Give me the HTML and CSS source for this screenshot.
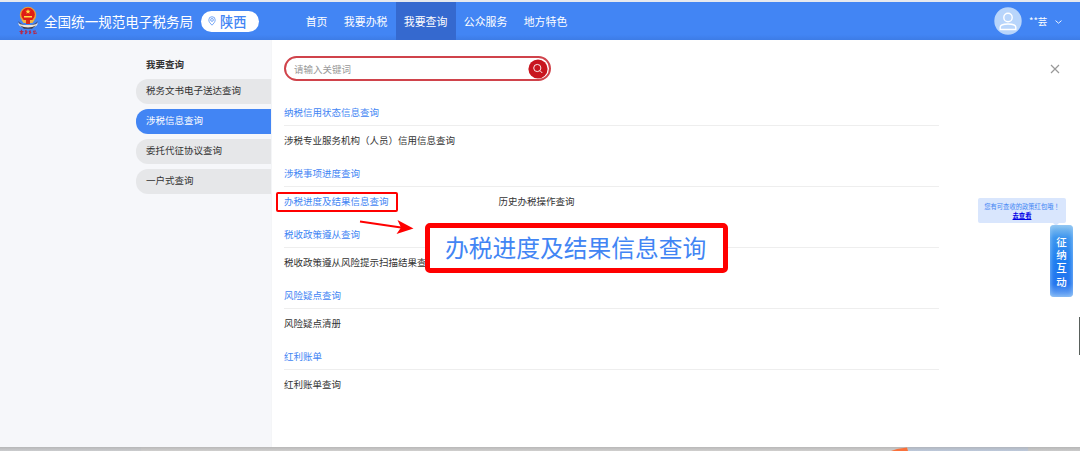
FILE: index.html
```html
<!DOCTYPE html>
<html lang="zh-CN">
<head>
<meta charset="utf-8">
<title>全国统一规范电子税务局</title>
<link rel="stylesheet" href="styles.css">
</head>
<body>
<div class="app">
  <header class="header">
    <svg class="logo" width="22" height="31" viewBox="0 0 22 31">
      <path d="M1.200 15C3 21 8 22 11 22s8-1 9.800-7C17 19 14 19 11 19s-6 0-9.800-4Z" fill="#55516a"/>
      <path d="M1 17c3 2 6 2 10 2s7 0 10-2c-1 4-5 5-10 5s-9-1-10-5Z" fill="#e9e4da"/>
      <path d="M3 19.500c5 2.500 11 2.500 16 0l-4 3.300H7Z" fill="#3f3a48"/>
      <circle cx="11" cy="9" r="8.200" fill="#e8a13a"/>
      <circle cx="11" cy="8.500" r="6.800" fill="#df1d15"/>
      <path d="M11 3l.7 1.700 1.900.1-1.500 1.200.5 1.800-1.600-1-1.600 1 .5-1.800-1.500-1.200 1.900-.1ZM7 10h8v1.500H7Z" fill="#ffdc46"/>
      <path d="M4.500 14h13l-2 3h-9Z" fill="#f1b33f"/>
      <path d="M9 14h4v4H9Z" fill="#d92b1d"/>
      <path d="M2.500 25.500h4M4.500 23.800v4.500M3 27h3M8 25l2 1-2 2M9 24v4M12 25l2 2M13.500 24.500l-1 3.500M16 25.500l3-.5M17 24.500v3l3-.5" fill="none" stroke="#b3294b" stroke-width="1.100"/>
    </svg>
    <h1 class="brand">全国统一规范电子税务局</h1>
    <div class="region">
      <svg width="8" height="10" viewBox="0 0 8 10" fill="none" stroke="#5490f3" stroke-width=".8"><path d="M4 9.200C2.500 7.600.8 6 .8 3.900a3.200 3.200 0 0 1 6.400 0C7.200 6 5.500 7.600 4 9.200Z"/><circle cx="4" cy="3.900" r="1.400"/></svg>
      <span>陕西</span>
    </div>
    <nav class="nav">
      <a>首页</a><a>我要办税</a><a class="active">我要查询</a><a>公众服务</a><a>地方特色</a>
    </nav>
    <div class="user">
      <svg width="28" height="28" viewBox="0 0 28 28"><circle cx="14" cy="14" r="13.700" fill="#b8d5fb"/><g fill="none" stroke="#fff" stroke-width="1.400"><circle cx="14" cy="10.500" r="4.200"/><path d="M6.200 22.500v-2.200c0-2 3.500-3.300 7.800-3.300s7.800 1.300 7.800 3.300v2.200Z"/></g></svg>
      <span class="user-name">**芸</span>
      <svg class="caret" width="7" height="4" viewBox="0 0 7 4" fill="none" stroke="#fff" stroke-width=".9"><path d="M.5.600 3.500 3.200 6.500.600"/></svg>
    </div>
  </header>

  <div class="panel">
    <aside class="sidebar">
      <h2 class="side-title">我要查询</h2>
      <a class="side-item">税务文书电子送达查询</a>
      <a class="side-item selected">涉税信息查询</a>
      <a class="side-item">委托代征协议查询</a>
      <a class="side-item">一户式查询</a>
    </aside>
    <main class="content">
      <div class="toolbar">
        <div class="search">
          <span>请输入关键词</span>
          <svg width="20" height="20" viewBox="0 0 20 20"><circle cx="10" cy="10" r="9.600" fill="#c8161f"/><g fill="none" stroke="#fff" stroke-width=".9"><circle cx="9.300" cy="9" r="3.600"/><path d="m12 11.700 2.300 2.300"/></g></svg>
        </div>
        <svg class="close" width="10" height="10" viewBox="0 0 10 10" stroke="#999" stroke-width="1.200"><path d="m1 1 8 8M9 1 1 9"/></svg>
      </div>
      <section class="group"><h3>纳税信用状态信息查询</h3><div class="links"><a>涉税专业服务机构<span lang="zh-TW" class="paren">（</span>人员<span lang="zh-TW" class="paren">）</span>信用信息查询</a></div></section>
      <section class="group"><h3>涉税事项进度查询</h3><div class="links"><a class="current">办税进度及结果信息查询</a><a>历史办税操作查询</a></div></section>
      <section class="group"><h3>税收政策遵从查询</h3><div class="links"><a>税收政策遵从风险提示扫描结果查询</a></div></section>
      <section class="group"><h3>风险疑点查询</h3><div class="links"><a>风险疑点清册</a></div></section>
      <section class="group"><h3>红利账单</h3><div class="links"><a>红利账单查询</a></div></section>
    </main>
  </div>
  <div class="underlay">
    <svg width="18" height="4" viewBox="0 0 18 4"><path d="M0 4 6 2 16 .5 17 4Z" fill="#fa713b"/></svg>
  </div>

  <div class="mark"></div>
  <svg class="arrow" width="56" height="20" viewBox="0 0 56 20"><path d="M1 4.500 42 10.500" stroke="#f00" stroke-width="2"/><path d="M38.500 3 54.500 11.500 37.500 17 42 10.500Z" fill="#f00"/></svg>
  <div class="callout">办税进度及结果信息查询</div>
  <div class="tip"><span>您有可查收的政策红包哦<span lang="zh-TW" class="paren">！</span></span><a>去查看</a></div>
  <div class="interact"><span>征</span><span>纳</span><span>互</span><span>动</span></div>
  <div class="drawer"></div>
</div>
</body>
</html>
```

FILE: styles.css
```css
* { box-sizing: border-box; }
body {
  margin: 0;
  font-family: "Noto Sans CJK SC", sans-serif;
  font-size: 9.5px;
  color: #333;
}
h1, h2, h3 { margin: 0; font-weight: 400; }
svg { display: block; flex: none; }
.paren { font-family: "Noto Sans CJK TC", sans-serif; }
.app {
  position: relative;
  display: flex;
  flex-direction: column;
  width: 1080px;
  height: 451px;
  overflow: hidden;
  background: #fff;
}
.header {
  display: flex;
  align-items: center;
  flex: none;
  height: 40px;
  padding: 0 18px 0 17px;
  border-top: 2px solid #e6e9ee;
  background: linear-gradient(#4285f4 86%, #3d7ce6);
  color: #fff;
}
.brand {
  width: 149px;
  margin-left: 5px;
  font-size: 13.55px;
  line-height: 20px;
  white-space: nowrap;
}
.region {
  display: flex;
  align-items: center;
  gap: 4px;
  width: 58px;
  height: 21px;
  margin-left: 8px;
  padding-left: 7px;
  border-radius: 11px;
  background: #fff;
  color: #4285f4;
  font-size: 13.2px;
  font-weight: 500;
  line-height: 21px;
}
.nav {
  display: flex;
  height: 38px;
  margin-left: 38.5px;
  font-size: 10.9px;
  line-height: 38px;
}
.nav a { padding: 0 8.2px; white-space: nowrap; }
.nav .active { background: #3569cf; }
.user { display: flex; align-items: center; margin-left: auto; }
.user-name { width: 19px; margin: 0 7px 0 7px; font-size: 9.5px; line-height: 20px; white-space: nowrap; }
.caret { margin-top: 2px; }
.panel {
  display: flex;
  flex: none;
  height: 407px;
}
.sidebar {
  display: flex;
  flex-direction: column;
  align-items: flex-end;
  gap: 5.5px;
  width: 272px;
  padding: 15.5px 0 0;
  border-right: 1px solid #f4f5f7;
  background: #f6f7fa;
}
.side-title {
  width: 135px;
  height: 18px;
  padding-left: 10px;
  font-size: 9.5px;
  font-weight: 700;
  line-height: 16px;
}
.side-item {
  width: 135px;
  height: 24.5px;
  padding-left: 10px;
  border-radius: 12px 0 0 12px;
  background: #e6e7e9;
  line-height: 23.5px;
}
.selected { background: #4285f4; color: #fff; }
.content { flex: 1; padding: 16px 20px 0 12px; background: #fff; }
.toolbar { display: flex; align-items: center; justify-content: space-between; height: 25px; margin-bottom: 21px; }
.search {
  display: flex;
  align-items: center;
  justify-content: space-between;
  width: 267px;
  height: 25px;
  padding: 0 1px 0 8px;
  border: 2px solid #d0434b;
  border-radius: 13px;
  color: #999;
}
.group { height: 61px; }
.group h3 {
  width: 655px;
  height: 24px;
  padding-top: 2px;
  border-bottom: 1px solid #eee;
  color: #4285f4;
  font-size: 9.5px;
  line-height: 16px;
}
.links {
  display: grid;
  grid-template-columns: 214.5px 214px;
  padding-top: 6.4px;
  line-height: 16px;
  white-space: nowrap;
}
.links .current { color: #4285f4; }
.underlay {
  height: 4px;
  padding-left: 891px;
  background:
    linear-gradient(#a9a9a999, #d0d0d000),
    linear-gradient(90deg, #cbccce 141px, #d0cfce 141px 908px, #bdc9db 908px 1028px, #cbcbcb 1028px);
}
.mark {
  position: absolute;
  left: 276px;
  top: 192px;
  width: 122px;
  height: 20px;
  border: 2px solid #f00;
  border-radius: 2px;
}
.arrow { position: absolute; left: 359px; top: 217px; }
.callout {
  position: absolute;
  left: 425px;
  top: 223px;
  width: 303px;
  height: 50px;
  padding-left: 15px;
  border: 5px solid #f00;
  border-radius: 5px;
  background: #fff;
  color: #4285f4;
  font-size: 23.75px;
  line-height: 37px;
  white-space: nowrap;
}
.tip {
  position: absolute;
  left: 978px;
  top: 198px;
  display: flex;
  flex-direction: column;
  align-items: center;
  width: 88px;
  height: 25px;
  padding-top: 5px;
  border-radius: 2px;
  background: #d9e6fd;
  color: #4285f4;
  font-size: 6.3px;
  line-height: 8.5px;
  white-space: nowrap;
}
.tip::after {
  content: "";
  position: absolute;
  right: 7px;
  top: 25px;
  border: 3px solid transparent;
  border-top-color: #d9e6fd;
  border-bottom: 0;
}
.tip a { color: #0000e6; font-weight: 700; text-decoration: underline; }
.interact {
  position: absolute;
  left: 1050px;
  top: 225px;
  display: flex;
  flex-direction: column;
  align-items: center;
  width: 23px;
  height: 72px;
  padding-top: 10px;
  border-radius: 4px;
  background: linear-gradient(#8cc4ef, #3b94ee 18%, #1e7df0 50%, #2374ee 82%, #76acf3);
  box-shadow: inset 0 0 5px #9acbf7;
  color: #fff;
  font-size: 10.5px;
  font-weight: 500;
  line-height: 13.2px;
}
.drawer {
  position: absolute;
  left: 1079px;
  top: 317px;
  width: 1px;
  height: 38px;
  background: #59605c;
}
```
